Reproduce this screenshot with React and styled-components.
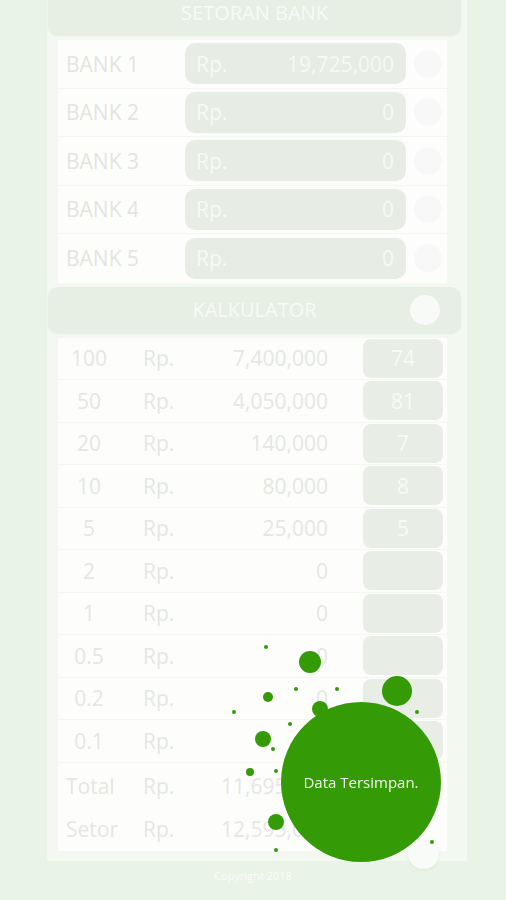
import React from "react";
import styled, { createGlobalStyle } from "styled-components";

const banks = [
  { name: "BANK 1", value: "19,725,000" },
  { name: "BANK 2", value: "0" },
  { name: "BANK 3", value: "0" },
  { name: "BANK 4", value: "0" },
  { name: "BANK 5", value: "0" },
];

const pecahan = [
  { nominal: "100", total: "7,400,000", qty: "74" },
  { nominal: "50", total: "4,050,000", qty: "81" },
  { nominal: "20", total: "140,000", qty: "7" },
  { nominal: "10", total: "80,000", qty: "8" },
  { nominal: "5", total: "25,000", qty: "5" },
  { nominal: "2", total: "0", qty: "" },
  { nominal: "1", total: "0", qty: "" },
  { nominal: "0.5", total: "0", qty: "" },
  { nominal: "0.2", total: "0", qty: "" },
  { nominal: "0.1", total: "0", qty: "" },
];

const ringkasan = [
  { label: "Total", value: "11,695,000" },
  { label: "Setor", value: "12,595,000" },
];

// splash drops around the toast bubble
const drops = [
  [40, 7, 2], [84, 22, 11], [70, 49, 2], [111, 49, 2], [42, 57, 5],
  [171, 51, 15], [8, 72, 2], [191, 72, 2], [94, 69, 8], [64, 84, 2],
  [37, 99, 8], [47, 109, 2], [24, 132, 4], [50, 131, 2], [50, 182, 8],
  [50, 210, 2], [206, 202, 2],
];

export default function App() {
  return (
    <>
      <GlobalStyle />
      <Page>
        <Panel>
          <SectionHeader>SETORAN BANK</SectionHeader>
          <SectionBody $gap={5}>
            {banks.map((bank) => (
              <BankRow key={bank.name}>
                <BankName>{bank.name}</BankName>
                <AmountInput>
                  <span>Rp.</span>
                  <span>{bank.value}</span>
                </AmountInput>
                <RowDot />
              </BankRow>
            ))}
          </SectionBody>

          <SectionHeader $top={4}>
            KALKULATOR
            <HeaderToggle />
          </SectionHeader>
          <SectionBody $gap={5}>
            {pecahan.map((p) => (
              <CalcRow key={p.nominal}>
                <Nominal>{p.nominal}</Nominal>
                <Currency>Rp.</Currency>
                <Amount>{p.total}</Amount>
                <QtyBox>{p.qty}</QtyBox>
              </CalcRow>
            ))}
            <Summary>
              {ringkasan.map((r) => (
                <SummaryRow key={r.label}>
                  <SummaryLabel>{r.label}</SummaryLabel>
                  <Currency>Rp.</Currency>
                  <Amount>{r.value}</Amount>
                </SummaryRow>
              ))}
            </Summary>
          </SectionBody>
        </Panel>
        <Footer>Copyright 2018</Footer>
      </Page>

      <Fab />

      <Toast>
        <svg width="240" height="230" viewBox="0 0 240 230">
          {drops.map(([cx, cy, r], i) => (
            <circle key={i} cx={cx} cy={cy} r={r} fill="#349a06" />
          ))}
          <circle cx="135" cy="142" r="80" fill="#349a06" />
        </svg>
        <ToastText>Data Tersimpan.</ToastText>
      </Toast>
    </>
  );
}

const GlobalStyle = createGlobalStyle`
  body {
    margin: 0;
    background: #e9f3e6;
    font-family: "Open Sans", "Noto Sans", sans-serif;
    overflow: hidden;
  }
`;

const Page = styled.div`
  padding: 0 39px 0 47px;
  margin-top: -11px;
`;

const Panel = styled.div`
  background: #f3f9f1;
  padding: 0 6px 10px 1px;
`;

const SectionHeader = styled.div`
  position: relative;
  display: flex;
  align-items: center;
  justify-content: center;
  height: 46px;
  margin-top: ${(p) => p.$top || 0}px;
  border-radius: 10px;
  background: #e7eee4;
  color: #f7faf6;
  font-size: 20px;
  box-shadow: 0 1px 2px rgba(200, 214, 196, 0.35);
`;

const HeaderToggle = styled.span`
  position: absolute;
  right: 21px;
  top: 8px;
  width: 30px;
  height: 30px;
  border-radius: 50%;
  background: #f8faf7;
`;

const SectionBody = styled.div`
  margin: ${(p) => p.$gap}px 14px 0 10px;
  background: #fdfefc;
`;

const BankRow = styled.div`
  display: grid;
  grid-template-columns: 119px 221px 28px;
  column-gap: 8px;
  align-items: center;
  height: 48.5px;
  border-bottom: 1px solid #f3f6f2;
  box-sizing: border-box;
  &:last-child {
    border-bottom: none;
  }
`;

const BankName = styled.span`
  padding-left: 8px;
  font-size: 21px;
  color: #e2e5e1;
`;

const AmountInput = styled.div`
  display: flex;
  justify-content: space-between;
  align-items: center;
  height: 41px;
  padding: 0 12px 0 11px;
  border-radius: 10px;
  background: #e7ede4;
  color: #f7f9f6;
  font-size: 21px;
`;

const RowDot = styled.span`
  width: 28px;
  height: 28px;
  border-radius: 50%;
  background: #f7f8f7;
`;

const CalcRow = styled.div`
  display: grid;
  grid-template-columns: 62px 73px 135px 1fr;
  align-items: center;
  height: 42.5px;
  padding-right: 4px;
  border-bottom: 1px solid #f3f6f2;
  box-sizing: border-box;
  font-size: 21px;
  color: #e4e7e3;
`;

const Nominal = styled.span`
  text-align: center;
`;

const Currency = styled.span`
  padding-left: 23px;
`;

const Amount = styled.span`
  text-align: right;
`;

const QtyBox = styled.span`
  justify-self: end;
  display: flex;
  align-items: center;
  justify-content: center;
  width: 80px;
  height: 39px;
  border-radius: 8px;
  background: #e8ede5;
  color: #f8faf7;
`;

const Summary = styled.div`
  margin-top: 2px;
  background: #fdfefc;
`;

const SummaryRow = styled(CalcRow)`
  height: 43px;
  border-bottom: none;
`;

const SummaryLabel = styled.span`
  padding-left: 8px;
`;

const Footer = styled.div`
  height: 30px;
  line-height: 30px;
  text-align: center;
  margin-left: -8px;
  font-size: 11px;
  color: #fafcf9;
`;

const Fab = styled.span`
  position: fixed;
  left: 408px;
  top: 838px;
  width: 31px;
  height: 31px;
  border-radius: 50%;
  background: #f9fbf8;
  box-shadow: 0 1px 3px rgba(210, 222, 206, 0.5);
`;

const Toast = styled.div`
  position: fixed;
  left: 226px;
  top: 640px;
  width: 240px;
  height: 230px;
  svg {
    display: block;
  }
`;

const ToastText = styled.span`
  position: absolute;
  left: 55px;
  top: 62px;
  width: 160px;
  height: 160px;
  display: flex;
  align-items: center;
  justify-content: center;
  color: #f1f6ee;
  font-size: 15px;
`;
